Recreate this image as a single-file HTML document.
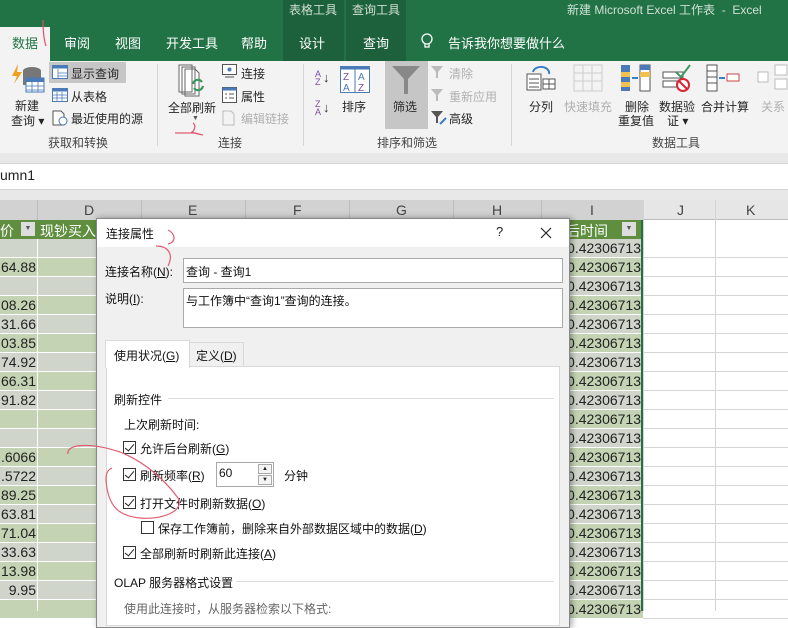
<!DOCTYPE html>
<html><head><meta charset="utf-8">
<style>
*{margin:0;padding:0;box-sizing:border-box}
body{width:788px;height:611px;overflow:hidden;position:relative;background:#fff;font-family:"Liberation Sans","Noto Sans CJK SC",sans-serif;font-size:12px;color:#222}
.a{position:absolute;white-space:nowrap}
.t{color:#fff;font-size:13px}
.rl{font-size:12px;color:#262626}
.gl{font-size:12px;color:#444}
.dis{color:#b0b0b0}
.cell{position:absolute;height:19px;border-bottom:1px solid #fff;font-size:14px;line-height:19px;color:#222}
.cb{position:absolute;width:13px;height:13px;border:1px solid #333;background:#fff}
.cb.k::after{content:"";position:absolute;left:3px;top:0px;width:4px;height:8px;border:solid #222;border-width:0 1.5px 1.5px 0;transform:rotate(40deg)}
.dl{font-size:12px;color:#111}
u{text-decoration:underline}
</style></head><body>
<div class="a" style="left:0;top:0;width:788px;height:61px;background:#217346"></div>
<div class="a" style="left:283px;top:0;width:61px;height:61px;background:#1c613b"></div>
<div class="a" style="left:346px;top:0;width:60px;height:61px;background:#1c613b"></div>
<div class="a t" style="left:289px;top:1px;color:#cfe0d5;font-size:12px">表格工具</div>
<div class="a t" style="left:352px;top:1px;color:#cfe0d5;font-size:12px">查询工具</div>
<div class="a t" style="left:567px;top:1px;color:#cfe0d5;font-size:12px">新建 Microsoft Excel 工作表 &nbsp;- &nbsp;Excel</div>
<div class="a" style="left:0;top:27px;width:50px;height:34px;background:#f3f3f3"></div>
<div class="a" style="left:12px;top:33px;color:#217346;font-size:13px">数据</div>
<div class="a t" style="left:64px;top:33px">审阅</div>
<div class="a t" style="left:115px;top:33px">视图</div>
<div class="a t" style="left:166px;top:33px">开发工具</div>
<div class="a t" style="left:241px;top:33px">帮助</div>
<div class="a t" style="left:299px;top:33px">设计</div>
<div class="a t" style="left:363px;top:33px">查询</div>
<svg class="a" style="left:420px;top:32px" width="14" height="18"><circle cx="7" cy="7" r="5" fill="none" stroke="#fff" stroke-width="1.3"/><path d="M5 12v3h4v-3" stroke="#fff" fill="none" stroke-width="1.3"/></svg>
<div class="a t" style="left:448px;top:33px">告诉我你想要做什么</div>
<svg class="a" style="left:40px;top:18px" width="8" height="30"><path d="M3 2 C3 14,4 22,6 28" stroke="#e0506a" fill="none" stroke-width="1.2"/></svg>
<div class="a" style="left:0;top:61px;width:788px;height:92px;background:#f3f3f3"></div>
<div class="a" style="left:157px;top:64px;width:1px;height:82px;background:#d5d5d5"></div>
<div class="a" style="left:303px;top:64px;width:1px;height:82px;background:#d5d5d5"></div>
<div class="a" style="left:511px;top:64px;width:1px;height:82px;background:#d5d5d5"></div>
<svg class="a" style="left:10px;top:64px" width="36" height="32"><path d="M8 0 L2 12 H7 L4 20 L12 8 H7 Z" fill="#f0a020"/><ellipse cx="22" cy="7" rx="9" ry="4" fill="#777"/><rect x="13" y="7" width="18" height="14" fill="#777"/><rect x="16" y="14" width="18" height="14" fill="#fff" stroke="#4a7ab8"/><rect x="16" y="14" width="18" height="4" fill="#4a7ab8"/><path d="M16 22H34M16 26H34M22 18V28M28 18V28" stroke="#4a7ab8" stroke-width=".8"/></svg>
<div class="a rl" style="left:15px;top:97px">新建</div>
<div class="a rl" style="left:11px;top:112px">查询 ▾</div>
<div class="a" style="left:49px;top:62px;width:77px;height:21px;background:#c6c6c6"></div>
<svg class="a" style="left:52px;top:65px" width="16" height="14"><rect x=".5" y=".5" width="15" height="13" fill="#fff" stroke="#4a7ab8"/><rect x=".5" y=".5" width="15" height="3" fill="#4a7ab8"/><path d="M6 4V14M6 8H15M6 11H15" stroke="#4a7ab8" stroke-width=".8"/></svg>
<div class="a rl" style="left:71px;top:65px">显示查询</div>
<svg class="a" style="left:52px;top:88px" width="16" height="14"><rect x=".5" y=".5" width="15" height="13" fill="#fff" stroke="#4a7ab8"/><rect x=".5" y=".5" width="15" height="3" fill="#4a7ab8"/><path d="M1 7H15M1 10H15M5 4V14M10 4V14" stroke="#4a7ab8" stroke-width=".8"/></svg>
<div class="a rl" style="left:71px;top:88px">从表格</div>
<svg class="a" style="left:52px;top:110px" width="16" height="16"><path d="M1 1H9L12 4V15H1Z" fill="#fff" stroke="#555"/><circle cx="11" cy="11" r="4" fill="#fff" stroke="#4a7ab8"/></svg>
<div class="a rl" style="left:71px;top:110px">最近使用的源</div>
<div class="a gl" style="left:48px;top:134px">获取和转换</div>
<svg class="a" style="left:178px;top:64px" width="32" height="34"><path d="M1 1H14V28H1Z M4 3H17V30H4Z M7 5H17L21 9V32H7Z" fill="#fff" stroke="#666"/><path d="M15 20a5 5 0 0 1 9-2M25 22a5 5 0 0 1-9 2" stroke="#3c9a5f" stroke-width="2.2" fill="none"/></svg>
<div class="a rl" style="left:168px;top:99px">全部刷新</div>
<div class="a" style="left:192px;top:115px;font-size:7px;color:#555">▼</div>
<svg class="a" style="left:174px;top:120px" width="30" height="20"><path d="M1 13H20 M19 3 C22 5,21 10,18 12 C20 13,24 14,29 15" stroke="#e05d72" stroke-width="1.3" fill="none"/></svg>
<svg class="a" style="left:222px;top:64px" width="15" height="14"><rect x=".5" y=".5" width="14" height="10" fill="#fff" stroke="#555"/><circle cx="7.5" cy="5.5" r="2" fill="#4a7ab8"/><path d="M3 13H12" stroke="#555"/></svg>
<div class="a rl" style="left:241px;top:65px">连接</div>
<svg class="a" style="left:222px;top:87px" width="15" height="16"><rect x=".5" y=".5" width="14" height="15" fill="#fff" stroke="#555"/><rect x=".5" y=".5" width="14" height="3" fill="#4a7ab8"/><path d="M3 7h2M7 7h5M3 11h2M7 11h5" stroke="#555"/></svg>
<div class="a rl" style="left:241px;top:88px">属性</div>
<svg class="a" style="left:222px;top:110px" width="15" height="16"><path d="M1 1H9L12 4V15H1Z" fill="none" stroke="#bbb"/></svg>
<div class="a rl dis" style="left:241px;top:110px">编辑链接</div>
<div class="a gl" style="left:218px;top:134px">连接</div>
<div class="a" style="left:315px;top:70px;font-size:9px;line-height:8px;color:#7a4ea0">A<br>Z</div><div class="a" style="left:323px;top:70px;font-size:13px;color:#333">↓</div>
<div class="a" style="left:315px;top:100px;font-size:9px;line-height:8px;color:#7a4ea0">Z<br>A</div><div class="a" style="left:323px;top:100px;font-size:13px;color:#333">↓</div>
<svg class="a" style="left:340px;top:66px" width="30" height="27"><rect x=".5" y=".5" width="29" height="26" fill="#fff" stroke="#4a7ab8"/><rect x=".5" y=".5" width="29" height="3" fill="#4a7ab8"/><path d="M15 3V27" stroke="#4a7ab8"/><text x="3" y="14" font-size="10" fill="#7a4ea0" font-family="Liberation Sans">Z</text><text x="3" y="25" font-size="10" fill="#4a7ab8" font-family="Liberation Sans">A</text><text x="18" y="14" font-size="10" fill="#4a7ab8" font-family="Liberation Sans">A</text><text x="18" y="25" font-size="10" fill="#7a4ea0" font-family="Liberation Sans">Z</text></svg>
<div class="a rl" style="left:342px;top:98px">排序</div>
<div class="a" style="left:385px;top:61px;width:43px;height:68px;background:#c6c6c6"></div>
<svg class="a" style="left:391px;top:65px" width="30" height="30"><path d="M1 1H29L17 14V29H13V14Z" fill="#888"/></svg>
<div class="a rl" style="left:393px;top:98px">筛选</div>
<svg class="a" style="left:431px;top:66px" width="14" height="12"><path d="M0 0H12L7 6V12H5V6Z" fill="#bbb"/></svg><div class="a rl dis" style="left:449px;top:65px">清除</div>
<svg class="a" style="left:431px;top:89px" width="14" height="12"><path d="M0 0H12L7 6V12H5V6Z" fill="#bbb"/></svg><div class="a rl dis" style="left:449px;top:88px">重新应用</div>
<svg class="a" style="left:431px;top:111px" width="16" height="14"><path d="M0 0H12L7 6V12H5V6Z" fill="#555"/><path d="M9 13L15 7" stroke="#3a7ec8" stroke-width="2"/></svg><div class="a rl" style="left:449px;top:110px">高级</div>
<div class="a gl" style="left:377px;top:134px">排序和筛选</div>
<svg class="a" style="left:525px;top:64px" width="32" height="28"><path d="M8 8a8 6 0 0 1 16 2" stroke="#3a7ec8" stroke-width="2" fill="none"/><rect x="2" y="10" width="14" height="16" fill="#fff" stroke="#555"/><path d="M4 15h10M4 19h10M4 23h10" stroke="#555"/><rect x="18" y="15" width="12" height="10" fill="#fff" stroke="#555"/><path d="M24 15v10M18 20h12" stroke="#555"/></svg>
<div class="a rl" style="left:529px;top:98px">分列</div>
<svg class="a" style="left:573px;top:64px" width="32" height="28"><rect x="1" y="1" width="28" height="26" fill="none" stroke="#ccc"/><path d="M1 9h28M1 17h28M10 1v26M19 1v26" stroke="#ccc"/></svg>
<div class="a rl dis" style="left:564px;top:98px">快速填充</div>
<svg class="a" style="left:620px;top:64px" width="32" height="28"><rect x="1" y="1" width="9" height="26" fill="#4a7ab8"/><rect x="1" y="8" width="9" height="5" fill="#f0c050"/><rect x="1" y="18" width="9" height="5" fill="#f0c050"/><rect x="20" y="1" width="10" height="26" fill="#fff" stroke="#555"/><rect x="20" y="1" width="10" height="5" fill="#4a7ab8"/><rect x="20" y="8" width="10" height="5" fill="#f0c050"/><path d="M12 14h6" stroke="#3a7ec8" stroke-width="2"/></svg>
<div class="a rl" style="left:625px;top:98px">删除</div>
<div class="a rl" style="left:618px;top:112px">重复值</div>
<svg class="a" style="left:662px;top:64px" width="32" height="28"><rect x="1" y="8" width="20" height="6" fill="#fff" stroke="#555"/><rect x="1" y="17" width="14" height="6" fill="#fff" stroke="#555"/><path d="M14 8l5 5 9-12" stroke="#3c9a5f" stroke-width="2" fill="none"/><circle cx="21" cy="21" r="6" fill="#fff" stroke="#d23" stroke-width="2"/><path d="M17 17l8 8" stroke="#d23" stroke-width="2"/></svg>
<div class="a rl" style="left:659px;top:98px">数据验</div>
<div class="a rl" style="left:667px;top:112px">证 ▾</div>
<svg class="a" style="left:706px;top:64px" width="36" height="28"><rect x="1" y="1" width="10" height="26" fill="#fff" stroke="#555"/><path d="M1 7h10M1 13h10M1 19h10" stroke="#555"/><path d="M13 14h6" stroke="#3a7ec8" stroke-width="2"/><rect x="21" y="10" width="12" height="7" fill="#fff" stroke="#c44"/></svg>
<div class="a rl" style="left:701px;top:98px">合并计算</div>
<svg class="a" style="left:757px;top:64px" width="31" height="28"><rect x="1" y="8" width="10" height="10" fill="#fff" stroke="#bbb"/><rect x="18" y="1" width="12" height="10" fill="#fff" stroke="#bbb"/><rect x="18" y="15" width="12" height="10" fill="#fff" stroke="#bbb"/></svg>
<div class="a rl dis" style="left:761px;top:98px">关系</div>
<div class="a gl" style="left:652px;top:134px">数据工具</div>
<div class="a" style="left:0;top:153px;width:788px;height:48px;background:#e8e8e8"></div>
<div class="a" style="left:0;top:163px;width:788px;height:27px;background:#fff;border-top:1px solid #d4d4d4;border-bottom:1px solid #d4d4d4"></div>
<div class="a" style="left:0;top:167px;font-size:14px;color:#222">umn1</div>
<div class="a" style="left:0;top:200px;width:788px;height:20px;background:#e6e6e6;border-bottom:1px solid #bbb"></div>
<div class="a" style="left:0;top:200px;width:643px;height:20px;background:#d2d2d2"></div>
<div class="a" style="left:37px;top:200px;width:1px;height:20px;background:#bbb"></div>
<div class="a" style="left:141px;top:200px;width:1px;height:20px;background:#bbb"></div>
<div class="a" style="left:245px;top:200px;width:1px;height:20px;background:#bbb"></div>
<div class="a" style="left:349px;top:200px;width:1px;height:20px;background:#bbb"></div>
<div class="a" style="left:453px;top:200px;width:1px;height:20px;background:#bbb"></div>
<div class="a" style="left:541px;top:200px;width:1px;height:20px;background:#bbb"></div>
<div class="a" style="left:643px;top:200px;width:1px;height:411px;background:#d4d4d4"></div>
<div class="a" style="left:715px;top:200px;width:1px;height:411px;background:#d4d4d4"></div>
<div class="a" style="left:84px;top:202px;font-size:14px;color:#444">D</div>
<div class="a" style="left:188px;top:202px;font-size:14px;color:#444">E</div>
<div class="a" style="left:293px;top:202px;font-size:14px;color:#444">F</div>
<div class="a" style="left:396px;top:202px;font-size:14px;color:#444">G</div>
<div class="a" style="left:492px;top:202px;font-size:14px;color:#444">H</div>
<div class="a" style="left:590px;top:202px;font-size:14px;color:#444">I</div>
<div class="a" style="left:677px;top:202px;font-size:14px;color:#444">J</div>
<div class="a" style="left:746px;top:202px;font-size:14px;color:#444">K</div>
<div class="a" style="left:0;top:220px;width:643px;height:19px;background:#5f8f3e"></div>
<div class="a" style="left:0;top:221px;color:#fff;font-size:14px">价</div>
<div class="a" style="left:21px;top:222px;width:14px;height:14px;background:#ddd;font-size:7px;color:#555;text-align:center;line-height:14px">▼</div>
<div class="a" style="left:40px;top:221px;color:#fff;font-size:14px">现钞买入</div>
<div class="a" style="left:566px;top:221px;color:#fff;font-size:14px">后时间</div>
<div class="a" style="left:622px;top:222px;width:14px;height:14px;background:#ddd;font-size:7px;color:#555;text-align:center;line-height:14px">▼</div>
<div id="rows"></div>
<script>
var v=["","64.88","","08.26","31.66","03.85","74.92","66.31","91.82","","",".6066",".5722","89.25","63.81","71.04","33.63","13.98","9.95",""];
var h="";
for(var i=0;i<20;i++){var y=239+i*19;var c=i%2?"#c3d3b3":"#cfd5ca";
h+='<div class="cell" style="left:0;top:'+y+'px;width:643px;background:'+c+'"></div>';
h+='<div class="cell" style="left:0;top:'+y+'px;width:36px;text-align:right;border:0">'+v[i]+'</div>';
h+='<div class="cell" style="left:541px;top:'+y+'px;width:100px;text-align:right;border:0">0.42306713</div>';
h+='<div class="a" style="left:643px;top:'+(y+18)+'px;width:145px;height:1px;background:#d4d4d4"></div>';}
document.getElementById('rows').innerHTML=h;
</script>
<div class="a" style="left:37px;top:239px;width:1px;height:372px;background:#fff"></div>
<div class="a" style="left:641px;top:220px;width:2px;height:391px;background:#217346"></div>
<div class="a" style="left:96px;top:218px;width:474px;height:410px;background:#f0f0f0;border:1px solid #888;box-shadow:2px 0 6px rgba(0,0,0,.35)"></div>
<div class="a" style="left:97px;top:219px;width:472px;height:28px;background:#fff"></div>
<div class="a dl" style="left:106px;top:225px">连接属性</div>
<div class="a" style="left:496px;top:224px;font-size:13px">?</div>
<svg class="a" style="left:540px;top:227px" width="12" height="12"><path d="M1 1L11 11M11 1L1 11" stroke="#222" stroke-width="1.2"/></svg>
<svg class="a" style="left:148px;top:228px" width="36" height="45"><path d="M20 2 C28 6,28 14,20 16 M8 18 C20 18,26 26,20 38" stroke="#e05d72" stroke-width="1.2" fill="none"/></svg>
<div class="a dl" style="left:105px;top:263px">连接名称(<u>N</u>):</div>
<div class="a" style="left:183px;top:258px;width:380px;height:25px;background:#fff;border:1px solid #aaa"></div>
<div class="a dl" style="left:186px;top:263px">查询 - 查询1</div>
<div class="a dl" style="left:105px;top:290px">说明(<u>I</u>):</div>
<div class="a" style="left:183px;top:288px;width:380px;height:40px;background:#fff;border:1px solid #aaa"></div>
<div class="a dl" style="left:186px;top:292px">与工作簿中“查询1”查询的连接。</div>
<div class="a" style="left:106px;top:366px;width:454px;height:260px;background:#fff;border:1px solid #d9d9d9"></div>
<div class="a" style="left:189px;top:342px;width:55px;height:25px;background:#f0f0f0;border:1px solid #d9d9d9"></div>
<div class="a dl" style="left:196px;top:347px">定义(<u>D</u>)</div>
<div class="a" style="left:105px;top:340px;width:85px;height:28px;background:#fff;border:1px solid #d9d9d9;border-bottom:none"></div>
<div class="a dl" style="left:114px;top:347px">使用状况(<u>G</u>)</div>
<div class="a dl" style="left:114px;top:391px">刷新控件</div>
<div class="a" style="left:168px;top:398px;width:386px;height:1px;background:#ddd"></div>
<div class="a dl" style="left:124px;top:416px">上次刷新时间:</div>
<div class="cb k" style="left:123px;top:441px"></div><div class="a dl" style="left:140px;top:440px">允许后台刷新(<u>G</u>)</div>
<div class="cb k" style="left:123px;top:468px"></div><div class="a dl" style="left:140px;top:467px">刷新频率(<u>R</u>)</div>
<div class="a" style="left:216px;top:462px;width:58px;height:25px;background:#fff;border:1px solid #aaa"></div>
<div class="a dl" style="left:219px;top:466px">60</div>
<div class="a" style="left:258px;top:464px;width:14px;height:10px;border:1px solid #aaa;background:#f4f4f4;font-size:6px;text-align:center;line-height:9px">▲</div>
<div class="a" style="left:258px;top:475px;width:14px;height:10px;border:1px solid #aaa;background:#f4f4f4;font-size:6px;text-align:center;line-height:9px">▼</div>
<div class="a dl" style="left:284px;top:467px">分钟</div>
<div class="cb k" style="left:123px;top:496px"></div><div class="a dl" style="left:140px;top:495px">打开文件时刷新数据(<u>O</u>)</div>
<div class="cb" style="left:141px;top:521px"></div><div class="a dl" style="left:158px;top:520px">保存工作簿前，删除来自外部数据区域中的数据(<u>D</u>)</div>
<div class="cb k" style="left:123px;top:546px"></div><div class="a dl" style="left:140px;top:545px">全部刷新时刷新此连接(<u>A</u>)</div>
<div class="a dl" style="left:114px;top:574px">OLAP 服务器格式设置</div>
<div class="a" style="left:236px;top:581px;width:318px;height:1px;background:#ddd"></div>
<div class="a dl" style="left:124px;top:600px;color:#666">使用此连接时，从服务器检索以下格式:</div>
<svg class="a" style="left:60px;top:440px" width="150" height="85"><path d="M8 14 C6 4,30 2,60 12 C85 22,105 40,118 58 C125 72,100 80,80 78 C60 76,48 68,46 40 C46 32,48 30,52 28" stroke="#e05d72" stroke-width="1.2" fill="none"/></svg>
</body></html>
